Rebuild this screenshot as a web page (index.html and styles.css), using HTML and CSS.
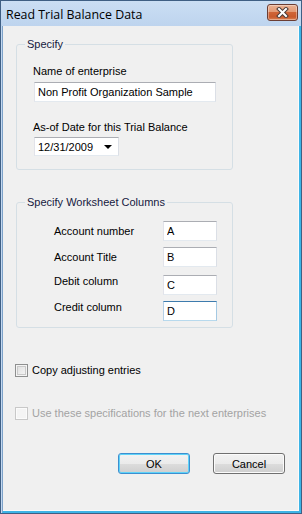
FILE: index.html
```html
<!DOCTYPE html>
<html lang="en">
  <head>
    <meta charset="UTF-8" />
    <title>Read Trial Balance Data</title>
    <link rel="stylesheet" href="styles.css">
  </head>
  <body>
    <div class="window">
      <div class="titlebar">
        <span class="title">Read Trial Balance Data</span>
        <button class="close-btn" aria-label="Close">
          <svg width="13" height="11" viewBox="0 0 13 11">
            <path d="M3 2 L10 9 M10 2 L3 9" stroke="#4a3b38" stroke-width="4" stroke-linecap="square" />
            <path d="M3 2 L10 9 M10 2 L3 9" stroke="#ffffff" stroke-width="2" stroke-linecap="square" />
          </svg>
        </button>
      </div>
      <div class="client">
        <fieldset class="group">
          <legend>Specify</legend>
          <div class="group-body specify-body">
            <label class="field-label" for="enterprise">Name of enterprise</label>
            <input id="enterprise" class="textbox wide" type="text" value="Non Profit Organization Sample">
            <label class="field-label date-label">As-of Date for this Trial Balance</label>
            <div class="datebox">
              <span>12/31/2009</span>
              <span class="drop-arrow"></span>
            </div>
          </div>
        </fieldset>

        <fieldset class="group group-columns">
          <legend>Specify Worksheet Columns</legend>
          <div class="group-body columns-body">
            <div class="col-row">
              <label for="col-a">Account number</label>
              <input id="col-a" class="textbox short" type="text" value="A">
            </div>
            <div class="col-row gap-6">
              <label for="col-b">Account Title</label>
              <input id="col-b" class="textbox short" type="text" value="B">
            </div>
            <div class="col-row gap-8 top">
              <label for="col-c">Debit column</label>
              <input id="col-c" class="textbox short" type="text" value="C">
            </div>
            <div class="col-row gap-6 top">
              <label for="col-d">Credit column</label>
              <input id="col-d" class="textbox short focused" type="text" value="D">
            </div>
          </div>
        </fieldset>

        <label class="check copy-check"><input type="checkbox">Copy adjusting entries</label>
        <label class="check next-check disabled"><input type="checkbox" disabled>Use these specifications for the next enterprises</label>

        <div class="buttons">
          <button class="btn default">OK</button>
          <button class="btn">Cancel</button>
        </div>
      </div>
    </div>
  </body>
</html>
```

FILE: styles.css
```css
body {
  margin: 0;
  font-family: "Liberation Sans", Arial, sans-serif;
  font-size: 11px;
  color: #000;
}
.window {
  width: 302px;
  height: 514px;
  box-sizing: border-box;
  border: 1px solid #3f5f84;
  background: #c3d8f0;
  display: flex;
  flex-direction: column;
  padding-left: 1px;
}
.titlebar {
  height: 25px;
  display: flex;
  align-items: center;
  justify-content: space-between;
  padding: 0 3px 0 5px;
  margin-left: -1px;
  background: linear-gradient(#cadef4, #bed4ee);
}
.title {
  font-family: "Open Sans", sans-serif;
  font-size: 12.4px;
  margin-top: 2px;
}
.close-btn {
  width: 31px;
  height: 17px;
  margin-top: -3px;
  padding: 0;
  border: 1px solid #6b3d33;
  border-radius: 3px;
  background: linear-gradient(#eab193 0%, #e39a75 45%, #cf6436 50%, #c95a2c 80%, #dc8456 100%);
  box-shadow: inset 0 0 0 1px rgba(255, 255, 255, 0.35);
  display: flex;
  align-items: center;
  justify-content: center;
}
.client {
  flex: 1;
  background: #f0f0f0;
  border-left: 1px solid #7da2c9;
  border-right: 2px solid #3db4e6;
  border-bottom: 2px solid #3db4e6;
  box-shadow: inset -1px -1px 0 #fbfbfb;
  padding: 12px 0 0 12px;
  display: flex;
  flex-direction: column;
  align-items: flex-start;
}
.group {
  width: 217px;
  box-sizing: border-box;
  margin: 0 0 0 1px;
  padding: 0;
  border: 1px solid #d5dfe5;
  border-radius: 3px;
}
.group legend {
  margin-left: 8px;
  padding: 0 2px;
  line-height: 13px;
  color: #16193f;
}
.specify-body {
  padding: 14px 0 13px 16px;
}
.field-label {
  display: block;
  line-height: 13px;
}
.date-label {
  margin-top: 19px;
}
.textbox {
  display: block;
  box-sizing: border-box;
  height: 20px;
  margin: 0;
  padding: 0 3px;
  font-family: "Liberation Sans", Arial, sans-serif;
  font-size: 11px;
  color: #000;
  background: #fff;
  border: 1px solid;
  border-color: #abadb3 #dbdfe6 #e3e9ef #e2e3ea;
  outline: none;
}
.wide {
  width: 182px;
  margin: 4px 0 0 1px;
}
.short {
  width: 54px;
}
.focused {
  border-color: #3d7bad #a4c9e3 #b7d9ed #b5cfe7;
}
.datebox {
  width: 85px;
  height: 19px;
  box-sizing: border-box;
  margin: 3px 0 0 1px;
  padding: 0 0 0 3px;
  background: #fff;
  border: 1px solid;
  border-color: #abadb3 #dbdfe6 #e3e9ef #e2e3ea;
  display: flex;
  align-items: center;
  justify-content: space-between;
}
.drop-arrow {
  width: 0;
  height: 0;
  margin-right: 6px;
  border-left: 4px solid transparent;
  border-right: 4px solid transparent;
  border-top: 4px solid #000;
}
.group-columns {
  margin-top: 26px;
}
.columns-body {
  padding: 12px 0 6px 37px;
}
.col-row {
  display: grid;
  grid-template-columns: 109px 54px;
  align-items: center;
  line-height: 13px;
}
.col-row.top label {
  align-self: start;
}
.gap-6 {
  margin-top: 6px;
}
.gap-8 {
  margin-top: 8px;
}
.check {
  display: flex;
  align-items: center;
  gap: 4px;
  line-height: 13px;
}
.copy-check {
  margin-top: 36px;
}
.next-check {
  margin-top: 30px;
}
.check input {
  appearance: none;
  width: 13px;
  height: 13px;
  margin: 0;
  box-sizing: border-box;
  border: 1px solid #8e8f8f;
  background: linear-gradient(135deg, #dcdcdc, #f8f8f8);
  box-shadow: inset 0 0 0 1px #f4f4f4, inset 0 0 0 2px #c9c9c9;
}
.check.disabled {
  color: #a3a3a3;
}
.check.disabled input {
  border-color: #c8c8c8;
  background: #f4f4f4;
  box-shadow: inset 0 0 0 1px #fbfbfb;
}
.buttons {
  margin-top: 33px;
  padding-left: 103px;
  display: flex;
  gap: 23px;
}
.btn {
  width: 72px;
  height: 21px;
  padding: 0;
  font-family: "Liberation Sans", Arial, sans-serif;
  font-size: 11px;
  color: #000;
  border: 1px solid #707070;
  border-radius: 3px;
  background: linear-gradient(#f2f2f2 0%, #ebebeb 50%, #dddddd 51%, #cfcfcf 100%);
  box-shadow: inset 0 0 0 1px #fbfbfb;
}
.btn.default {
  border-color: #3c8fd0;
  box-shadow: inset 0 0 0 1px #5fd3f8;
}
```
